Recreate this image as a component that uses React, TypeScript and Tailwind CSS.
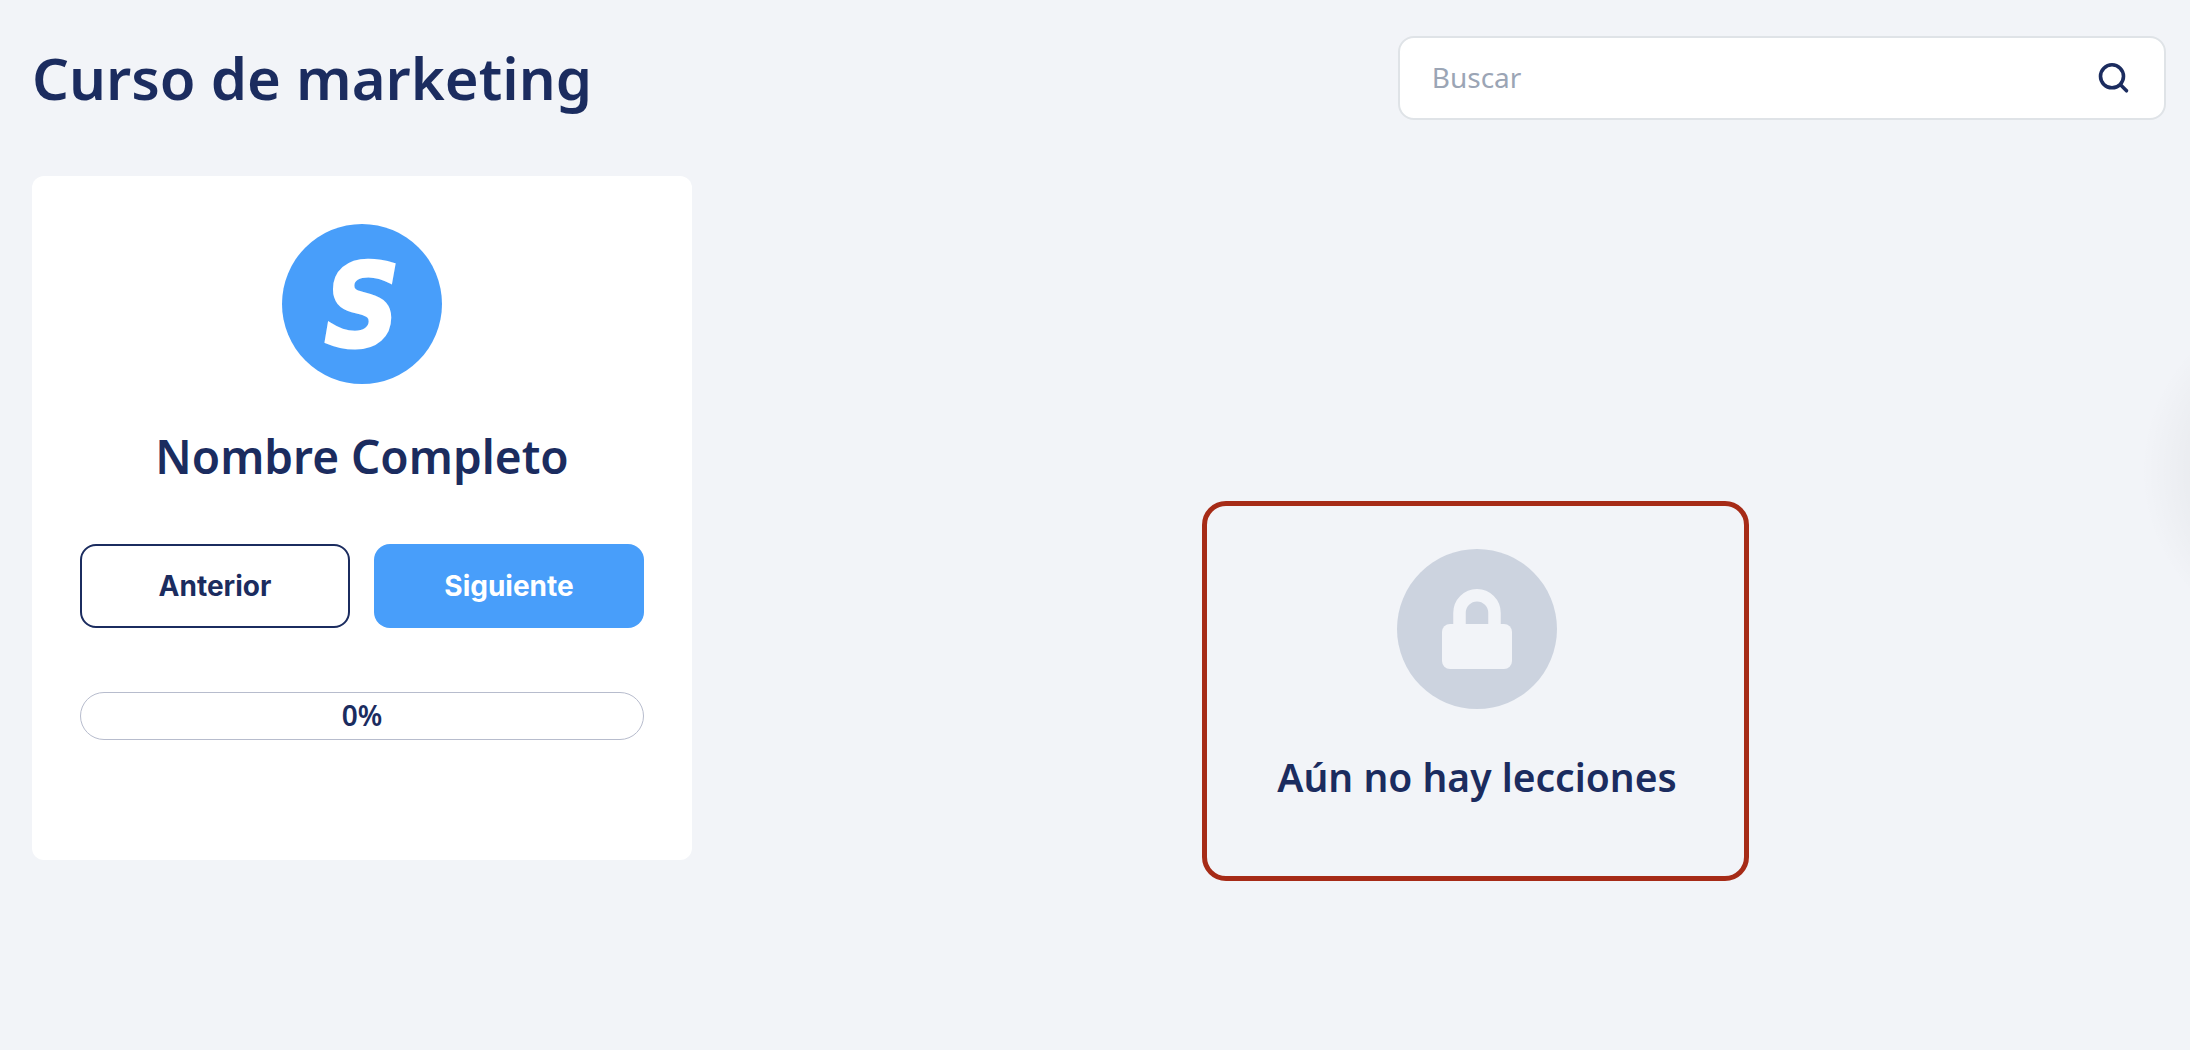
function SearchBox() {
  return (
    <form role="search" className="flex h-[84px] w-[36%] items-center rounded-2xl border-2 border-[#dfe3e7] bg-white px-8">
      <input
        type="search"
        placeholder="Buscar"
        aria-label="Buscar"
        className="h-full min-w-0 flex-1 bg-transparent pb-0.5 text-[28px] leading-[48px] text-[#1b2c5f] outline-none placeholder:text-[#9ba5b5]"
      />
      <button type="submit" aria-label="Buscar" className="text-[#1b2c5f]">
        <svg viewBox="0 0 36 36" className="h-9 w-9" fill="none" stroke="currentColor" strokeWidth="3.6" strokeLinecap="round">
          <circle cx="16" cy="16.3" r="11.5" />
          <path d="M24.5 24.8 L30.5 30.8" />
        </svg>
      </button>
    </form>
  );
}

function StudentCard() {
  const progress = 0;

  return (
    <section className="w-[660px] rounded-xl bg-white px-12 pt-12 pb-[120px]">
      <div className="mx-auto flex h-40 w-40 items-center justify-center rounded-full bg-[#489efa] pt-1">
        <span className="font-['DejaVu_Sans_Condensed','DejaVu_Sans',sans-serif] text-[116px] leading-none font-bold text-white italic [-webkit-text-stroke:3px_white]">
          S
        </span>
      </div>
      <h2 className="mt-10 text-center text-[46px] leading-[64px] font-[650]">Nombre Completo</h2>
      <div className="mt-14 grid grid-cols-2 gap-6 font-['Inter',sans-serif] text-[28px] font-bold">
        <button type="button" className="h-[84px] rounded-2xl border-2 border-[#1b2c5f]">
          Anterior
        </button>
        <button type="button" className="h-[84px] rounded-2xl bg-[#489efa] text-white">
          Siguiente
        </button>
      </div>
      <div
        role="progressbar"
        aria-label="Progreso"
        aria-valuenow={progress}
        className="relative mt-16 flex h-12 items-center justify-center overflow-hidden rounded-full border border-[#b7bccd] pb-0.5"
      >
        <div className="absolute inset-y-0 left-0 bg-[#489efa]" style={{ width: `${progress}%` }} />
        <span className="relative text-[28px] leading-none font-[650]">{progress}%</span>
      </div>
    </section>
  );
}

function EmptyLessons() {
  return (
    <section className="mt-[325px] flex h-[380px] w-[547px] flex-col items-center rounded-3xl border-5 border-[#a62b17] pt-[43px] pl-1">
      <svg viewBox="0 0 160 160" className="h-40 w-40" aria-hidden="true">
        <circle cx="80" cy="80" r="80" fill="#ccd3df" />
        <path d="M62.5 76 V64 a17.5 17.8 0 0 1 35 0 V76" fill="none" stroke="#f2f4f8" strokeWidth="12.5" />
        <rect x="45" y="75" width="70" height="45" rx="8" fill="#f2f4f8" />
      </svg>
      <h2 className="mt-10 text-[39px] leading-[56px] font-[650]">Aún no hay lecciones</h2>
    </section>
  );
}

export default function App() {
  return (
    <div className="relative min-h-screen overflow-hidden bg-[#f2f4f8] pt-9 pr-6 pb-12 pl-8 font-['Noto_Sans',sans-serif] text-[#1b2c5f]">
      <header className="flex items-center justify-between gap-8">
        <h1 className="text-[58px] leading-[84px] font-[650]">Curso de marketing</h1>
        <SearchBox />
      </header>
      <main className="mt-14 flex items-start gap-24">
        <StudentCard />
        <div className="flex flex-1 justify-center pr-1">
          <EmptyLessons />
        </div>
      </main>
      <div className="pointer-events-none absolute top-[300px] right-0 h-[342px] w-14 bg-[radial-gradient(circle_at_183px_171px,rgba(0,0,0,0.1)_60px,rgba(0,0,0,0.03)_127px,transparent_176px)]" />
    </div>
  );
}
